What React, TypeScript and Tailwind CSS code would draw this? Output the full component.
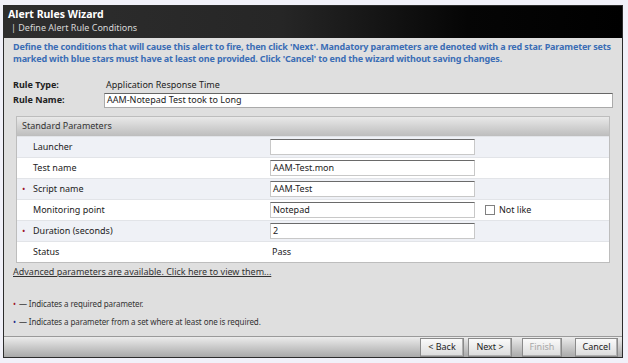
import React from "react";

type Row = {
  label: string;
  req?: boolean;
  value?: string;
  text?: string;
  notLike?: boolean;
};

const rows: Row[] = [
  { label: "Launcher", value: "" },
  { label: "Test name", value: "AAM-Test.mon" },
  { label: "Script name", req: true, value: "AAM-Test" },
  { label: "Monitoring point", value: "Notepad", notLike: true },
  { label: "Duration (seconds)", req: true, value: "2" },
  { label: "Status", text: "Pass" },
];

const font = { fontFamily: "'Noto Sans', 'Liberation Sans', sans-serif" };

function Btn({ label, disabled }: { label: string; disabled?: boolean }) {
  return (
    <div
      className={`flex h-[19px] items-center justify-center border border-[#8a8a8a] bg-gradient-to-b from-[#fafafa] to-[#dcdcdc] text-[9px] shadow-[inset_-1px_-1px_0_#b0b0b0] ${
        disabled ? "text-[#a8a8a8]" : "text-[#222]"
      }`}
    >
      {label}
    </div>
  );
}

export default function App() {
  return (
    <div className="h-[363px] w-[628px] bg-[#f1f1f9] pb-[5px] pl-[3px] pr-[5px] pt-[5px]" style={font}>
      <div className="flex h-full flex-col border border-[#2c2c2c] bg-[#dfdfdf]">
        {/* title bar */}
        <div className="h-[32px] bg-[linear-gradient(90deg,#2e2e2e_0%,#262626_45%,#050505_75%,#000_100%)] px-[4px] pt-[3px] leading-none">
          <div className="text-[10.5px] font-bold text-white">Alert Rules Wizard</div>
          <div className="mt-[3px] pl-[3px] text-[9px] text-[#d8d8d8]">| Define Alert Rule Conditions</div>
        </div>

        <div className="flex flex-1 flex-col px-[9px] pt-[3px]">
          <p className="text-[9px] font-bold leading-[12px] tracking-[-0.15px] text-[#3b6db5]">
            <span className="block whitespace-nowrap">
              Define the conditions that will cause this alert to fire, then click 'Next'. Mandatory parameters are
              denoted with a red star. Parameter sets
            </span>
            <span className="block whitespace-nowrap">
              marked with blue stars must have at least one provided. Click 'Cancel' to end the wizard without saving
              changes.
            </span>
          </p>

          <div className="mt-[13px] flex items-center text-[9px] text-[#222]">
            <span className="w-[93px] font-bold">Rule Type:</span>
            <span>Application Response Time</span>
          </div>
          <div className="mt-[1px] flex items-center text-[9px] text-[#222]">
            <span className="w-[91px] font-bold">Rule Name:</span>
            <div className="flex h-[15px] flex-1 items-center border border-[#aaa] border-t-[#666] bg-white pl-[2px]">
              AAM-Notepad Test took to Long
            </div>
          </div>

          {/* standard parameters */}
          <div className="mx-[3px] mt-[8px] border border-[#bdbdbd] bg-white">
            <div className="flex h-[19px] items-center bg-gradient-to-b from-[#e9e9e9] to-[#bdbdbd] pl-[5px] text-[9px] text-[#333]">
              Standard Parameters
            </div>
            {rows.map((r, i) => (
              <div
                key={r.label}
                className={`flex h-[21px] items-center border-t border-[#e2e4e8] text-[9px] text-[#222] ${
                  i % 2 === 0 ? "bg-[#eff1f6]" : "bg-white"
                }`}
              >
                <div className="flex w-[253px] items-center">
                  <span className="w-[16px] pl-[5px] text-[#a0182c]">{r.req ? "•" : ""}</span>
                  <span>{r.label}</span>
                </div>
                {r.text !== undefined ? (
                  <span className="pl-[2px]">{r.text}</span>
                ) : (
                  <div className="flex h-[16px] w-[205px] items-center border border-[#c8c8c8] border-t-[#6a6a6a] bg-white pl-[2px]">
                    {r.value}
                  </div>
                )}
                {r.notLike && (
                  <div className="ml-[10px] flex items-center">
                    <span className="h-[10px] w-[10px] border border-[#808080] bg-white" />
                    <span className="ml-[4px]">Not like</span>
                  </div>
                )}
              </div>
            ))}
          </div>

          <div className="mt-[2px] text-[9px] text-[#333] underline">
            Advanced parameters are available. Click here to view them...
          </div>

          <div className="mt-[20px] flex items-center text-[8px] tracking-[-0.1px] text-[#333]">
            <span className="mr-[3px] text-[#a0182c]">•</span>— Indicates a required parameter.
          </div>
          <div className="mt-[6px] flex items-center text-[8px] tracking-[-0.1px] text-[#333]">
            <span className="mr-[3px] text-[#1c2a8a]">•</span>— Indicates a parameter from a set where at least one is
            required.
          </div>
        </div>

        {/* footer */}
        <div className="flex h-[21px] items-center justify-end border-t border-[#9a9a9a] bg-gradient-to-b from-[#ececec] to-[#a9a9a9] pr-[4px]">
          <div className="w-[44px]">
            <Btn label="< Back" />
          </div>
          <div className="ml-[4px] w-[44px]">
            <Btn label="Next >" />
          </div>
          <div className="ml-[10px] w-[40px]">
            <Btn label="Finish" disabled />
          </div>
          <div className="ml-[13px] w-[43px]">
            <Btn label="Cancel" />
          </div>
        </div>
      </div>
    </div>
  );
}
